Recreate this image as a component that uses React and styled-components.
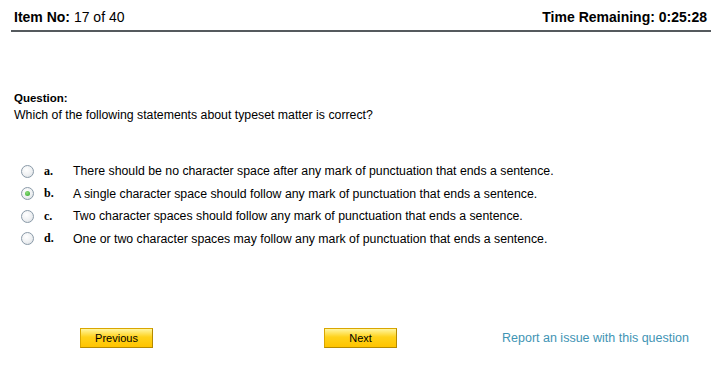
import React, { useState } from 'react'
import styled, { createGlobalStyle } from 'styled-components'

const Global = createGlobalStyle`
  body {
    margin: 0;
    background: #fff;
    font-family: "Liberation Sans", Arial, sans-serif;
    color: #000;
  }
`

const Page = styled.div`
  width: 727px;
  height: 390px;
  display: flex;
  flex-direction: column;
`

const Header = styled.header`
  margin: 0 16px 0 11px;
  padding: 9px 0 4px 3px;
  display: flex;
  justify-content: space-between;
  border-bottom: 2px solid #555a5e;
  font-size: 14px;
  line-height: 17px;
  b { font-weight: bold; }
`

const Right = styled.span`
  font-weight: bold;
  padding-right: 4px;
`

const Question = styled.section`
  padding: 58px 0 0 14px;
  font-size: 12.3px;
  line-height: 17px;
  h2 {
    margin: 0;
    font-size: 11.5px;
    font-weight: bold;
  }
  p { margin: 0; }
`

const Options = styled.ul`
  list-style: none;
  margin: 39px 0 0;
  padding: 0 0 0 21px;
  display: flex;
  flex-direction: column;
  gap: 6.5px;
`

const Option = styled.li`
  display: flex;
  align-items: center;
  height: 16px;
  font-size: 12.3px;
  cursor: pointer;
`

const Radio = styled.span`
  width: 11px;
  height: 11px;
  border-radius: 50%;
  border: 1px solid #8a9aa8;
  background: radial-gradient(circle at 40% 35%, #ffffff 0%, #eef0f2 55%, #d3d8dd 100%);
  display: flex;
  align-items: center;
  justify-content: center;
  &::after {
    content: '';
    width: 5px;
    height: 5px;
    border-radius: 50%;
    background: radial-gradient(circle at 40% 35%, #8ee07a, #2ea12a);
    display: ${p => (p.$on ? 'block' : 'none')};
  }
`

const Letter = styled.span`
  font-family: "Liberation Serif", "Times New Roman", serif;
  font-weight: bold;
  font-size: 12px;
  width: 29px;
  padding-left: 10px;
`

const Footer = styled.footer`
  margin-top: 81.5px;
  display: flex;
  align-items: center;
  padding-left: 80px;
`

const Button = styled.button`
  width: 73px;
  height: 20px;
  border: 1px solid #d9a600;
  border-bottom-color: #b58a00;
  border-right-color: #b58a00;
  background: linear-gradient(#fff6a0 0%, #ffd21a 45%, #ffc400 100%);
  font-family: "Liberation Sans", Arial, sans-serif;
  font-size: 11px;
  color: #000;
  padding: 0;
  margin-right: ${p => p.$gap || 0}px;
  cursor: pointer;
`

const Link = styled.a`
  margin-left: 105px;
  font-size: 12.5px;
  color: #3f94b4;
  text-decoration: none;
  cursor: pointer;
`

const options = [
  ['a.', 'There should be no character space after any mark of punctuation that ends a sentence.'],
  ['b.', 'A single character space should follow any mark of punctuation that ends a sentence.'],
  ['c.', 'Two character spaces should follow any mark of punctuation that ends a sentence.'],
  ['d.', 'One or two character spaces may follow any mark of punctuation that ends a sentence.'],
]

export default function App() {
  const [sel, setSel] = useState(1)
  return (
    <Page>
      <Global />
      <Header>
        <span><b>Item No:</b> 17 of 40</span>
        <Right>Time Remaining: 0:25:28</Right>
      </Header>
      <Question>
        <h2>Question:</h2>
        <p>Which of the following statements about typeset matter is correct?</p>
      </Question>
      <Options>
        {options.map(([l, t], i) => (
          <Option key={l} onClick={() => setSel(i)}>
            <Radio $on={sel === i} />
            <Letter>{l}</Letter>
            <span>{t}</span>
          </Option>
        ))}
      </Options>
      <Footer>
        <Button $gap={171}>Previous</Button>
        <Button>Next</Button>
        <Link>Report an issue with this question</Link>
      </Footer>
    </Page>
  )
}
